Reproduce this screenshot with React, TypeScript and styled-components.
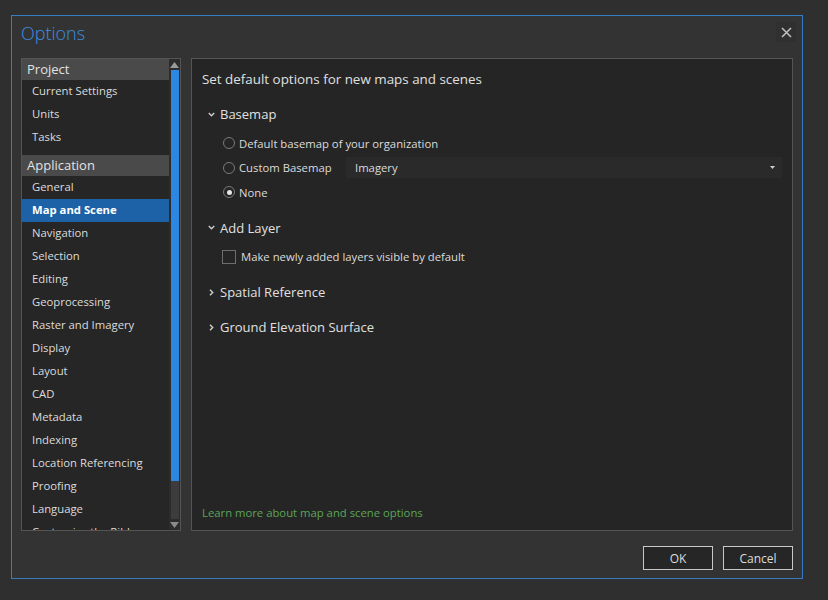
import React, { useState } from 'react';
import styled, { createGlobalStyle } from 'styled-components';

const GlobalStyle = createGlobalStyle`
  html, body {
    margin: 0;
    padding: 0;
    background: #2f2f2f;
    font-family: "Open Sans", "Noto Sans", sans-serif;
    color: #dcdcdc;
  }
`;

// CSS in JS
const Page = styled.div`
  width: 828px;
  height: 600px;
  padding: 15px 0 0 11px;
  box-sizing: border-box;
`;

const Dialog = styled.div`
  width: 792px;
  height: 564px;
  box-sizing: border-box;
  border: 1px solid #3a7cc0;
  background: #333333;
  display: flex;
  flex-direction: column;
  padding: 0 9px 8px 9px;
`;

const TitleBar = styled.div`
  height: 42px;
  display: flex;
  align-items: flex-start;
  justify-content: space-between;
  h1 {
    margin: 0;
    font-size: 18px;
    font-weight: 300;
    line-height: 24px;
    color: #3d8ee0;
    padding-top: 5px;
  }
`;

const CloseButton = styled.button`
  width: 20px;
  height: 20px;
  padding: 0;
  margin: 6px -3px 0 0;
  border: none;
  background: #303030;
  display: flex;
  align-items: center;
  justify-content: center;
`;

const Body = styled.div`
  flex: 1;
  display: flex;
  gap: 10px;
  min-height: 0;
`;

const Nav = styled.div`
  width: 160px;
  box-sizing: border-box;
  border: 1px solid #545454;
  background: #262626;
  display: flex;
  overflow: hidden;
`;

const NavList = styled.ul`
  list-style: none;
  margin: 0;
  padding: 0;
  flex: 1;
  overflow: hidden;
`;

const NavHeader = styled.li<{ $first?: boolean }>`
  height: 21px;
  line-height: 21px;
  margin-top: ${p => (p.$first ? '0' : '6px')};
  padding-left: 5px;
  background: #4a4a4a;
  font-size: 13px;
  color: #e2e2e2;
`;

const NavItem = styled.li<{ $selected?: boolean }>`
  height: 23px;
  line-height: 22px;
  padding-left: 10px;
  font-size: 11.3px;
  white-space: nowrap;
  color: ${p => (p.$selected ? '#ffffff' : '#dcdcdc')};
  background: ${p => (p.$selected ? '#1d62a6' : 'transparent')};
  font-weight: ${p => (p.$selected ? 700 : 400)};
`;

const ScrollBar = styled.div`
  width: 11px;
  display: flex;
  flex-direction: column;
  align-items: center;
  background: #2c2c2c;
`;

const ScrollArrow = styled.div`
  height: 11px;
  display: flex;
  align-items: center;
  justify-content: center;
`;

const Thumb = styled.div`
  width: 8px;
  height: 411px;
  background: #2b87e2;
`;

const Track = styled.div`
  width: 8px;
  flex: 1;
  background: #3c3c3c;
`;

const Panel = styled.div`
  flex: 1;
  box-sizing: border-box;
  border: 1px solid #545454;
  background: #252525;
  padding: 10px 10px 9px 10px;
  display: flex;
  flex-direction: column;
`;

const PanelTitle = styled.h2`
  margin: 0;
  font-size: 13.4px;
  font-weight: 400;
  line-height: 20px;
  color: #e0e0e0;
`;

const Section = styled.div`
  margin-top: 15px;
`;

const SectionHead = styled.div`
  display: flex;
  align-items: center;
  height: 20px;
  font-size: 13px;
  color: #e0e0e0;
  svg {
    margin: 0 5px 0 6px;
  }
`;

const Options = styled.div`
  margin: 7px 0 -2px;
`;

const OptionRow = styled.label`
  display: flex;
  align-items: center;
  height: 24.5px;
  padding-left: 20px;
  font-size: 11.3px;
  color: #dcdcdc;
`;

const Radio = styled.span<{ $checked?: boolean }>`
  width: 10px;
  height: 10px;
  border-radius: 50%;
  border: 1px solid #7a7a7a;
  margin: 0 4px 0 1px;
  display: flex;
  align-items: center;
  justify-content: center;
  &::after {
    content: '';
    width: 5px;
    height: 5px;
    border-radius: 50%;
    background: ${p => (p.$checked ? '#e6e6e6' : 'transparent')};
  }
`;

const RadioLabel = styled.span<{ $width?: number }>`
  width: ${p => (p.$width ? `${p.$width}px` : 'auto')};
  flex-shrink: 0;
`;

const CheckBox = styled.span`
  width: 12px;
  height: 12px;
  border: 1px solid #6e6e6e;
  margin-right: 5px;
`;

const Select = styled.div`
  flex: 1;
  height: 21px;
  background: #2a2a2a;
  display: flex;
  align-items: center;
  justify-content: space-between;
  padding: 0 7px 0 9px;
  font-size: 11.3px;
`;

const Spacer = styled.div`
  flex: 1;
`;

const LearnLink = styled.a`
  font-size: 11.3px;
  color: #5ba657;
  text-decoration: none;
  line-height: 16px;
`;

const Footer = styled.div`
  display: flex;
  justify-content: flex-end;
  gap: 10px;
  padding-top: 15px;
`;

const Button = styled.button`
  width: 70px;
  height: 24px;
  box-sizing: border-box;
  border: 1px solid #c8c8c8;
  background: #262626;
  color: #dcdcdc;
  font-family: "Open Sans", "Noto Sans", sans-serif;
  font-size: 12px;
  padding: 0;
`;

// Icons
const Chevron = ({ open }: { open: boolean }) => (
  <svg width="7" height="7" viewBox="0 0 7 7">
    {open ? (
      <path d="M0.8 2 L3.5 4.7 L6.2 2" stroke="#cfcfcf" strokeWidth="1.4" fill="none" />
    ) : (
      <path d="M2 0.8 L4.7 3.5 L2 6.2" stroke="#cfcfcf" strokeWidth="1.4" fill="none" />
    )}
  </svg>
);

const Triangle = ({ up, color, w = 9, h = 6 }: { up: boolean; color: string; w?: number; h?: number }) => (
  <svg width={w} height={h} viewBox={`0 0 ${w} ${h}`}>
    <path d={up ? `M0 ${h} L${w / 2} 0 L${w} ${h} Z` : `M0 0 L${w / 2} ${h} L${w} 0 Z`} fill={color} />
  </svg>
);

const projectItems = ['Current Settings', 'Units', 'Tasks'];
const appItems = [
  'General',
  'Map and Scene',
  'Navigation',
  'Selection',
  'Editing',
  'Geoprocessing',
  'Raster and Imagery',
  'Display',
  'Layout',
  'CAD',
  'Metadata',
  'Indexing',
  'Location Referencing',
  'Proofing',
  'Language',
  'Customize the Ribbon',
];

// Component
function App() {
  const [selected, setSelected] = useState('Map and Scene');
  const [basemap, setBasemap] = useState('none');

  return (
    <>
      <GlobalStyle />
      <Page>
        <Dialog>
          <TitleBar>
            <h1>Options</h1>
            <CloseButton aria-label="Close">
              <svg width="11" height="11" viewBox="0 0 11 11">
                <path d="M1 1 L10 10 M10 1 L1 10" stroke="#bdbdbd" strokeWidth="1.6" />
              </svg>
            </CloseButton>
          </TitleBar>
          <Body>
            <Nav>
              <NavList>
                <NavHeader $first>Project</NavHeader>
                {projectItems.map(item => (
                  <NavItem key={item} $selected={selected === item} onClick={() => setSelected(item)}>
                    {item}
                  </NavItem>
                ))}
                <NavHeader>Application</NavHeader>
                {appItems.map(item => (
                  <NavItem key={item} $selected={selected === item} onClick={() => setSelected(item)}>
                    {item}
                  </NavItem>
                ))}
              </NavList>
              <ScrollBar>
                <ScrollArrow><Triangle up color="#9a9a9a" /></ScrollArrow>
                <Thumb />
                <Track />
                <ScrollArrow><Triangle up={false} color="#8a8a8a" /></ScrollArrow>
              </ScrollBar>
            </Nav>
            <Panel>
              <PanelTitle>Set default options for new maps and scenes</PanelTitle>
              <Section>
                <SectionHead><Chevron open />Basemap</SectionHead>
                <Options>
                  <OptionRow onClick={() => setBasemap('org')}>
                    <Radio $checked={basemap === 'org'} />
                    <RadioLabel>Default basemap of your organization</RadioLabel>
                  </OptionRow>
                  <OptionRow onClick={() => setBasemap('custom')}>
                    <Radio $checked={basemap === 'custom'} />
                    <RadioLabel $width={107}>Custom Basemap</RadioLabel>
                    <Select>
                      <span>Imagery</span>
                      <Triangle up={false} color="#cfcfcf" w={5} h={3} />
                    </Select>
                  </OptionRow>
                  <OptionRow onClick={() => setBasemap('none')}>
                    <Radio $checked={basemap === 'none'} />
                    <RadioLabel>None</RadioLabel>
                  </OptionRow>
                </Options>
              </Section>
              <Section>
                <SectionHead><Chevron open />Add Layer</SectionHead>
                <Options>
                  <OptionRow>
                    <CheckBox />Make newly added layers visible by default
                  </OptionRow>
                </Options>
              </Section>
              <Section>
                <SectionHead><Chevron open={false} />Spatial Reference</SectionHead>
              </Section>
              <Section>
                <SectionHead><Chevron open={false} />Ground Elevation Surface</SectionHead>
              </Section>
              <Spacer />
              <LearnLink href="#">Learn more about map and scene options</LearnLink>
            </Panel>
          </Body>
          <Footer>
            <Button>OK</Button>
            <Button>Cancel</Button>
          </Footer>
        </Dialog>
      </Page>
    </>
  );
}

export default App;
